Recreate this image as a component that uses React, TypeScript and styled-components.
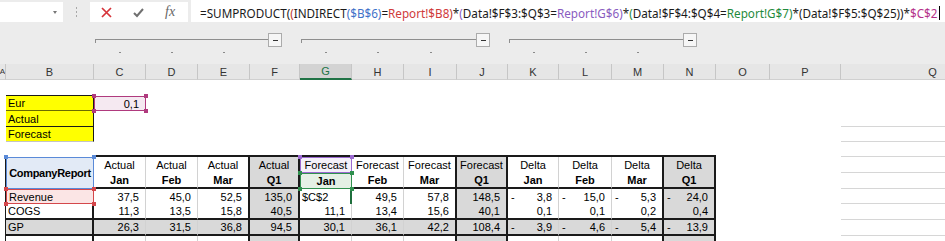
import React from "react";
import styled, { createGlobalStyle, css } from "styled-components";

const GlobalStyle = createGlobalStyle`
  html, body {
    margin: 0;
    padding: 0;
    background: #ffffff;
  }
  body {
    font-family: "Liberation Sans", Arial, sans-serif;
    overflow: hidden;
  }
`;

// column widths A..Q
const COLS = [6, 88, 52, 52, 52, 50, 52, 52, 53, 51, 51, 53, 52, 52, 54, 71, 184];
const LETTERS = "ABCDEFGHIJKLMNOPQ".split("");
const TEMPLATE = COLS.map((w) => `${w}px`).join(" ");
const ROWS = [16, 15, 16, 15, 15, 16, 16, 15, 16, 16, 16];

const BLK = "1px solid #1a1a1a";
const THICK = "2px solid #1a1a1a";
const THIN = "1px solid #d2d2d2";
const LIGHT = "1px solid #d6d6d6";
const YELLOW = "#ffff00";
const GREY = "#d9d9d9";

const RIGHT: Record<number, string> = {
  0: BLK, 1: THICK, 2: THIN, 3: THIN, 4: THICK, 5: THICK, 6: THIN,
  7: THIN, 8: THICK, 9: THICK, 10: THIN, 11: THIN, 12: THICK, 13: THICK,
};
const Q1_COLS = [5, 9, 13];

const Page = styled.div`
  width: 945px;
  height: 241px;
  overflow: hidden;
  background: #fff;
`;

const Chrome = styled.div`
  background: #ececec;
  width: 945px;
`;

const FormulaRow = styled.div`
  display: flex;
  align-items: flex-start;
  height: 22px;
`;

const NameBox = styled.div`
  width: 63px;
  height: 20px;
  margin-top: 2px;
  background: #fff;
  display: flex;
  align-items: center;
  justify-content: flex-end;
  padding-right: 6px;
  box-sizing: border-box;
`;

const DropArrow = styled.span`
  width: 0;
  height: 0;
  border-left: 2.5px solid transparent;
  border-right: 2.5px solid transparent;
  border-top: 3px solid #777;
`;

const Grip = styled.div`
  width: 27px;
  height: 24px;
  display: flex;
  flex-direction: column;
  align-items: center;
  justify-content: center;
  gap: 2px;
  span {
    width: 1px;
    height: 2px;
    background: #a8a8a8;
  }
`;

const EditBox = styled.div`
  width: 98px;
  height: 20px;
  margin-top: 2px;
  background: #fff;
  display: flex;
  align-items: center;
  gap: 21px;
  padding-left: 11px;
  box-sizing: border-box;
`;

const Fx = styled.span`
  font-family: "Liberation Serif", serif;
  font-style: italic;
  font-size: 14px;
  color: #666;
  line-height: 1;
`;

const FormulaInput = styled.div`
  flex: 1;
  height: 22px;
  margin-left: 3px;
  background: #fff;
  display: flex;
  align-items: center;
  padding: 3px 0 0 9px;
  box-sizing: border-box;
  font-family: "Noto Sans", "Liberation Sans", sans-serif;
  font-size: 11.7px;
  white-space: nowrap;
  overflow: hidden;
  color: #1a1a1a;
`;

const Ref = styled.span<{ $c?: string }>`
  color: ${(p) => p.$c ?? "#1a1a1a"};
`;

const Caret = styled.span`
  display: inline-block;
  width: 1px;
  height: 14px;
  background: #000;
  margin-left: 1px;
`;

const GroupArea = styled.div`
  display: grid;
  grid-template-columns: ${TEMPLATE};
  grid-template-rows: 25px 17px;
`;

const GroupBar = styled.div<{ $from: number; $to: number; $pad: number }>`
  grid-row: 1;
  grid-column: ${(p) => p.$from} / ${(p) => p.$to};
  display: flex;
  align-items: flex-end;
  padding-left: 1px;
  padding-right: ${(p) => p.$pad}px;
`;

const GroupLine = styled.div`
  flex: 1;
  height: 1px;
  margin-bottom: 7px;
  background: #8e8e8e;
  position: relative;
  &::before {
    content: "";
    position: absolute;
    left: 0;
    top: 0;
    width: 1px;
    height: 4px;
    background: #8e8e8e;
  }
`;

const CollapseBox = styled.div`
  width: 14px;
  height: 14px;
  box-sizing: border-box;
  border: 1px solid #ababab;
  background: #f6f6f6;
  display: flex;
  align-items: center;
  justify-content: center;
  span {
    width: 5px;
    height: 1px;
    background: #333;
  }
`;

const DotCell = styled.div<{ $col: number }>`
  grid-row: 2;
  grid-column: ${(p) => p.$col};
  display: flex;
  justify-content: center;
  padding-top: 5px;
  span {
    width: 2px;
    height: 1px;
    background: #8a8a8a;
  }
`;

const HeaderRow = styled.div`
  display: grid;
  grid-template-columns: ${TEMPLATE};
  height: 16px;
`;

const ColHead = styled.div<{ $active?: boolean; $clip?: boolean }>`
  box-sizing: border-box;
  background: ${(p) => (p.$active ? "#d3d3d3" : "#e6e6e6")};
  border-right: 1px solid #c6c6c6;
  border-bottom: ${(p) => (p.$active ? "2px solid #217346" : "1px solid #d0d0d0")};
  color: ${(p) => (p.$active ? "#217346" : "#333")};
  font-size: 11px;
  display: flex;
  align-items: center;
  justify-content: ${(p) => (p.$clip ? "flex-end" : "center")};
  overflow: hidden;
  ${(p) =>
    p.$clip &&
    css`
      font-size: 8px;
      span {
        margin-right: 0;
      }
    `}
`;

const SheetGrid = styled.div`
  display: grid;
  grid-template-columns: ${TEMPLATE};
  grid-template-rows: ${ROWS.map((h) => `${h}px`).join(" ")};
  font-size: 11px;
  color: #000;
`;

type Align = "l" | "c" | "r";

const Cell = styled.div<{
  $bg?: string;
  $r?: string;
  $b?: string;
  $al?: Align;
  $bold?: boolean;
  $hl?: string;
  $span?: number;
  $dash?: boolean;
  $active?: boolean;
  $tight?: boolean;
}>`
  position: relative;
  box-sizing: border-box;
  min-width: 0;
  display: flex;
  align-items: center;
  white-space: nowrap;
  grid-row: span ${(p) => p.$span ?? 1};
  justify-content: ${(p) =>
    p.$dash ? "space-between" : p.$al === "r" ? "flex-end" : p.$al === "c" ? "center" : "flex-start"};
  padding: 0 ${(p) => (p.$al === "r" || p.$dash ? "6px" : "2px")} 0 ${(p) => (p.$dash ? "3px" : "2px")};
  background: ${(p) => p.$bg ?? "transparent"};
  border-right: ${(p) => p.$r ?? "none"};
  border-bottom: ${(p) => p.$b ?? "none"};
  font-weight: ${(p) => (p.$bold ? 700 : 400)};
  letter-spacing: ${(p) => (p.$tight ? "-0.3px" : "normal")};
  ${(p) =>
    p.$hl &&
    css`
      border: 1px solid ${p.$hl};
      z-index: 1;
    `}
  ${(p) =>
    p.$active &&
    css`
      border-right: 2px solid #1e6e3c;
    `}
`;

const Handle = styled.span<{ $c: string; $pos: "tl" | "tr" | "bl" | "br" }>`
  position: absolute;
  width: 4px;
  height: 4px;
  background: ${(p) => p.$c};
  ${(p) => (p.$pos[0] === "t" ? "top: -3px;" : "bottom: -3px;")}
  ${(p) => (p.$pos[1] === "l" ? "left: -3px;" : "right: -3px;")}
`;

type Spec = {
  t?: string;
  al?: Align;
  bold?: boolean;
  bg?: string;
  r?: string;
  b?: string;
  hl?: string;
  span?: number;
  active?: boolean;
  skip?: boolean;
  tight?: boolean;
};

const blank = (): Spec[] => COLS.map(() => ({}));

function tableRow(values: string[], opts: { bold?: boolean; bg?: string; b?: string; al?: Align }): Spec[] {
  return values.map((v, i) => {
    const col = i + 2;
    return {
      t: v,
      al: opts.al ?? "r",
      bold: opts.bold,
      r: RIGHT[col],
      b: opts.b,
      bg: Q1_COLS.includes(col) ? GREY : opts.bg,
    };
  });
}

const GROUPS = ["Actual", "Forecast", "Delta"];
const MONTHS = ["Jan", "Feb", "Mar", "Q1"];
const REVENUE = ["37,5", "45,0", "52,5", "135,0", "$C$2", "49,5", "57,8", "148,5", "-3,8", "-15,0", "-5,3", "-24,0"];
const COGS = ["11,3", "13,5", "15,8", "40,5", "11,1", "13,4", "15,6", "40,1", "0,1", "0,1", "0,2", "0,4"];
const GP = ["26,3", "31,5", "36,8", "94,5", "30,1", "36,1", "42,2", "108,4", "-3,9", "-4,6", "-5,4", "-13,9"];

function buildSheet(): Spec[][] {
  const rows: Spec[][] = [];
  const q = (r: Spec[]) => {
    r[16] = { b: LIGHT };
    return r;
  };

  const r1 = blank();
  r1[1] = { b: BLK };
  rows.push(r1);

  const r2 = blank();
  r2[1] = { t: "Eur", bg: YELLOW, r: BLK, b: "1px solid #6b6b00" };
  r2[2] = { t: "0,1", al: "r", hl: "#b03a7e", bg: "#f5e9f1" };
  rows.push(r2);

  const r3 = blank();
  r3[1] = { t: "Actual", bg: YELLOW, r: BLK, b: BLK };
  rows.push(q(r3));

  const r4 = blank();
  r4[1] = { t: "Forecast", bg: YELLOW, r: BLK, b: "1px solid #c4c4c4" };
  rows.push(q(r4));

  const r5 = blank();
  for (let c = 2; c <= 13; c++) r5[c] = { b: THICK };
  rows.push(q(r5));

  const h1: Spec[] = [
    { r: BLK },
    { t: "CompanyReport", bold: true, al: "c", span: 2, hl: "#5a8ad8", bg: "#e2eaf6", tight: true },
    ...tableRow(GROUPS.flatMap((g) => [g, g, g, g]), { al: "c" }),
    {}, {}, {},
  ];
  h1[6] = { ...h1[6], hl: "#9b6ad0", bg: "#f4f0f9" };
  rows.push(q(h1));

  const h2: Spec[] = [{ r: BLK }, { skip: true }, ...tableRow([...MONTHS, ...MONTHS, ...MONTHS], { al: "c", bold: true, b: THICK }), {}, {}, {}];
  h2[6] = { ...h2[6], hl: "#2f8f4e", bg: "#e4f0e5" };
  rows.push(q(h2));

  const rev: Spec[] = [{ r: BLK }, { t: "Revenue", hl: "#d4474b", bg: "#fbe5e5" }, ...tableRow(REVENUE, {}), {}, {}, {}];
  rev[6] = { ...rev[6], al: "l", active: true };
  rows.push(q(rev));

  const cogs: Spec[] = [{ r: BLK }, { t: "COGS", r: THICK, b: THICK }, ...tableRow(COGS, { b: THICK }), {}, {}, {}];
  rows.push(q(cogs));

  const gp: Spec[] = [{ r: BLK }, { t: "GP", r: THICK, b: THICK, bg: GREY }, ...tableRow(GP, { b: THICK, bg: GREY }), {}, {}, {}];
  rows.push(q(gp));

  const last: Spec[] = [{ r: BLK }, { r: THICK }, ...tableRow(Array(12).fill(""), {}), {}, {}, {}];
  rows.push(last);

  return rows;
}

const SHEET = buildSheet();

function CellContent({ s }: { s: Spec }) {
  if (s.t && s.t.startsWith("-") && s.t.length > 1) {
    return (
      <>
        <span>-</span>
        <span>{s.t.slice(1)}</span>
      </>
    );
  }
  return <>{s.t}</>;
}

const FORMULA: [string, string?][] = [
  ["=SUMPRODUCT("],
  ["(", "#c0392b"],
  ["INDIRECT"],
  ["($B$6)", "#3f72c9"],
  ["="],
  ["Report!$B8", "#d03a3a"],
  [")", "#c0392b"],
  ["*"],
  ["(", "#8a5cc0"],
  ["Data!$F$3:$Q$3="],
  ["Report!G$6", "#8a5cc0"],
  [")", "#8a5cc0"],
  ["*"],
  ["(", "#1f8a3c"],
  ["Data!$F$4:$Q$4="],
  ["Report!G$7", "#1f8a3c"],
  [")", "#1f8a3c"],
  ["*(Data!$F$5:$Q$25))*"],
  ["$C$2", "#b5318a"],
];

const GROUP_BARS = [
  { from: 3, to: 7, pad: 18 },
  { from: 7, to: 11, pad: 18 },
  { from: 11, to: 15, pad: 19 },
];
const DOT_COLS = [2, 3, 4, 6, 7, 8, 10, 11, 12];

export default function App() {
  return (
    <Page>
      <GlobalStyle />
      <Chrome>
        <FormulaRow>
          <NameBox>
            <DropArrow />
          </NameBox>
          <Grip>
            <span />
            <span />
            <span />
          </Grip>
          <EditBox>
            <svg width="11" height="11" viewBox="0 0 11 11">
              <path d="M1 1 L10 10 M10 1 L1 10" stroke="#d6333a" strokeWidth="1.7" fill="none" />
            </svg>
            <svg width="11" height="11" viewBox="0 0 11 11">
              <path d="M1 6 L4 9 L10 2" stroke="#707070" strokeWidth="2" fill="none" />
            </svg>
            <Fx>fx</Fx>
          </EditBox>
          <FormulaInput>
            {FORMULA.map(([text, color], i) => (
              <Ref key={i} $c={color}>
                {text}
              </Ref>
            ))}
            <Caret />
          </FormulaInput>
        </FormulaRow>
        <GroupArea>
          {GROUP_BARS.map((g) => (
            <GroupBar key={g.from} $from={g.from} $to={g.to} $pad={g.pad}>
              <GroupLine />
              <CollapseBox>
                <span />
              </CollapseBox>
            </GroupBar>
          ))}
          {DOT_COLS.map((c) => (
            <DotCell key={c} $col={c + 1}>
              <span />
            </DotCell>
          ))}
        </GroupArea>
      </Chrome>
      <HeaderRow>
        {LETTERS.map((l, i) => (
          <ColHead key={l} $active={l === "G"} $clip={i === 0}>
            <span>{l}</span>
          </ColHead>
        ))}
      </HeaderRow>
      <SheetGrid>
        {SHEET.map((row, ri) =>
          row.map((s, ci) =>
            s.skip ? null : (
              <Cell
                key={`${ri}-${ci}`}
                $bg={s.bg}
                $r={s.r}
                $b={s.b}
                $al={s.al}
                $bold={s.bold}
                $hl={s.hl}
                $span={s.span}
                $active={s.active}
                $tight={s.tight}
                $dash={!!s.t && s.t.startsWith("-") && s.t.length > 1}
              >
                <CellContent s={s} />
                {s.hl &&
                  (["tl", "tr", "bl", "br"] as const).map((p) => <Handle key={p} $c={s.hl!} $pos={p} />)}
              </Cell>
            )
          )
        )}
      </SheetGrid>
    </Page>
  );
}
